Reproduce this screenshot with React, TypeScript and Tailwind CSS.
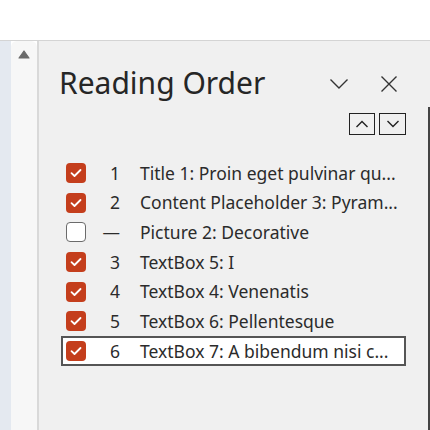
import React from 'react';

type Item = { num: string; label: string; checked: boolean; selected?: boolean };

const items: Item[] = [
  { num: '1', label: 'Title 1: Proin eget pulvinar qu...', checked: true },
  { num: '2', label: 'Content Placeholder 3: Pyram...', checked: true },
  { num: '—', label: 'Picture 2: Decorative', checked: false },
  { num: '3', label: 'TextBox 5: I', checked: true },
  { num: '4', label: 'TextBox 4: Venenatis', checked: true },
  { num: '5', label: 'TextBox 6: Pellentesque', checked: true },
  { num: '6', label: 'TextBox 7: A bibendum nisi c...', checked: true, selected: true },
];

const CheckBox = ({ checked }: { checked: boolean }) =>
  checked ? (
    <div className="w-[20px] h-[20px] rounded-[4px] bg-[#c43e1c] flex items-center justify-center shrink-0">
      <svg width="12" height="10" viewBox="0 0 12 10">
        <path d="M1.5 5.2 L4.5 8 L10.5 2" fill="none" stroke="white" strokeWidth="1.8" strokeLinecap="round" strokeLinejoin="round" />
      </svg>
    </div>
  ) : (
    <div className="w-[20px] h-[20px] rounded-[4px] bg-white border-[1.5px] border-[#6b6b6b] shrink-0" />
  );

export default function App() {
  return (
    <div className="w-[430px] h-[430px] bg-white flex flex-col overflow-hidden" style={{ fontFamily: '"Segoe UI", "Noto Sans", sans-serif' }}>
      <div className="h-[41px] bg-white border-b border-[#d4d4d4] shrink-0" />
      <div className="flex flex-1 min-h-0">
        {/* left gutter */}
        <div className="w-[11px] bg-[#e4e9f0]" />
        {/* scrollbar */}
        <div className="w-[26px] bg-[#f7f7f7] rounded-t-[6px] flex justify-center pt-[9px]">
          <svg width="12" height="9" viewBox="0 0 12 9">
            <path d="M6 1 L11 8 L1 8 Z" fill="#6b6b6b" stroke="#6b6b6b" strokeLinejoin="round" strokeWidth="1.2" />
          </svg>
        </div>
        <div className="w-[2px] bg-[#d9d9d9]" />
        {/* panel */}
        <div className="flex-1 bg-[#f0f0f0] flex flex-col pl-[21px] pr-[21px]">
          <div className="flex items-center h-[64px] pt-[8px]">
            <div className="text-[30px] text-[#262626] leading-none flex-1 -ml-[1px] mt-[12px]">Reading Order</div>
            <svg width="20" height="12" viewBox="0 0 20 12" className="mr-[31px] mt-[14px]">
              <path d="M1.5 1.5 L10 10 L18.5 1.5" fill="none" stroke="#333" strokeWidth="1.4" />
            </svg>
            <svg width="18" height="18" viewBox="0 0 18 18" className="mr-[8px] mt-[14px]">
              <path d="M1.5 1.5 L16.5 16.5 M16.5 1.5 L1.5 16.5" fill="none" stroke="#333" strokeWidth="1.4" />
            </svg>
          </div>
          <div className="flex justify-end gap-[4px] mt-[8px]">
            <div className="w-[26px] h-[22px] border-[1.5px] border-[#222] flex items-center justify-center">
              <svg width="14" height="8" viewBox="0 0 14 8">
                <path d="M1.5 7 L7 1.5 L12.5 7" fill="none" stroke="#222" strokeWidth="1.4" />
              </svg>
            </div>
            <div className="w-[27px] h-[22px] border-[1.5px] border-[#222] flex items-center justify-center">
              <svg width="14" height="8" viewBox="0 0 14 8">
                <path d="M1.5 1 L7 6.5 L12.5 1" fill="none" stroke="#222" strokeWidth="1.4" />
              </svg>
            </div>
          </div>
          <div className="flex flex-col mt-[23px]">
            {items.map((it, i) => (
              <div
                key={i}
                className={`flex items-center h-[29.7px] text-[17.5px] text-[#2b2b2b] border-2 ml-[1px] pl-[3px] ${
                  it.selected ? 'bg-white border-[#555]' : 'border-transparent'
                }`}
              >
                <CheckBox checked={it.checked} />
                <div className="w-[34px] text-right shrink-0">{it.num}</div>
                <div className="ml-[20px] whitespace-nowrap">{it.label}</div>
              </div>
            ))}
          </div>
        </div>
        <div className="w-[3px] bg-[#f0f0f0] flex flex-col">
          <div className="h-[66px]" />
          <div className="flex-1 w-[2px] ml-[1px] bg-[#444]" />
        </div>
      </div>
    </div>
  );
}
